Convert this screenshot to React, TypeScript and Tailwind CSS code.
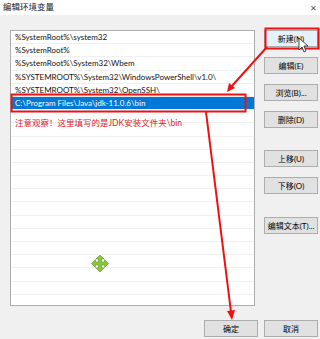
const paths = [
  '%SystemRoot%\\system32',
  '%SystemRoot%',
  '%SystemRoot%\\System32\\Wbem',
  '%SYSTEMROOT%\\System32\\WindowsPowerShell\\v1.0\\',
  '%SYSTEMROOT%\\System32\\OpenSSH\\',
  'C:\\Program Files\\Java\\jdk-11.0.6\\bin',
]

const rows = Array.from({ length: 21 }, (_, i) => paths[i] ?? '')

const font = { fontFamily: 'Lato, "Noto Sans CJK SC", sans-serif' }

function Btn({ label, className = '' }: { label: string; className?: string }) {
  return (
    <div
      className={`flex h-[17px] w-[54px] items-center justify-center whitespace-nowrap border border-[#adadad] bg-[#e1e1e1] text-[8px] leading-none text-black ${className}`}
    >
      {label}
    </div>
  )
}

export default function App() {
  return (
    <div
      className="relative flex h-[339px] w-[320px] flex-col overflow-hidden bg-[#f0f0f0]"
      style={font}
    >
      <header className="flex h-[15px] items-center justify-between bg-white pl-[3px] pr-[3px]">
        <span className="text-[8.5px] leading-none text-[#222]">编辑环境变量</span>
        <span className="text-[8px] leading-none text-[#555]">✕</span>
      </header>

      <div className="flex pl-[10px] pt-[15px]">
        <div className="h-[276px] w-[245px] overflow-hidden border border-[#adadad] bg-white">
          {rows.map((text, i) => (
            <div
              key={i}
              className={`flex h-[13.2px] items-center border-b border-[#f0f0f0] pl-[4px] text-[8px] leading-none ${
                i === 5 ? 'bg-[#0078d7] text-white' : 'text-[#111]'
              }`}
            >
              {text}
            </div>
          ))}
        </div>

        <div className="ml-[9px] flex flex-col">
          <Btn label="新建(N)" className="border-[#0078d7] bg-[#e5f1fb]" />
          <Btn label="编辑(E)" className="mt-[10px]" />
          <Btn label="浏览(B)..." className="mt-[10px]" />
          <Btn label="删除(D)" className="mt-[10px]" />
          <Btn label="上移(U)" className="mt-[22px]" />
          <Btn label="下移(O)" className="mt-[10px]" />
          <Btn label="编辑文本(T)..." className="mt-[23px]" />
        </div>
      </div>

      <div className="mt-[14px] flex justify-end gap-[6px] pr-[2px]">
        <Btn label="确定" className="w-[53px] border-[#0078d7]" />
        <Btn label="取消" />
      </div>

      {/* annotation */}
      <div className="absolute left-[15px] top-[119px] text-[8.5px] leading-none text-[#e0202a]">
        注意观察！这里填写的是JDK安装文件夹\bin
      </div>

      <svg className="pointer-events-none absolute left-0 top-0" width="320" height="339">
        <rect x="265.5" y="28.5" width="53" height="20" fill="none" stroke="#ee1111" strokeWidth="2" />
        <rect x="11.5" y="94.5" width="234" height="17" fill="none" stroke="#ee1111" strokeWidth="2" />
        <line x1="267" y1="47" x2="231" y2="87" stroke="#ee1111" strokeWidth="2" />
        <polygon points="227,92 229,83 235,88" fill="#ee1111" />
        <line x1="206" y1="112" x2="231" y2="312" stroke="#ee1111" strokeWidth="2" />
        <polygon points="232,320 227,311 235,310" fill="#ee1111" />
        <path
          d="M299 38 L299 50 L302 47 L304 52 L306 51 L304 46 L308 46 Z"
          fill="white"
          stroke="#222"
          strokeWidth="0.8"
        />
        <path
          d="M100 255 L104 259 L101.5 259 L101.5 262 L104.5 262 L104.5 259.5 L108.5 263.5 L104.5 267.5 L104.5 265 L101.5 265 L101.5 268 L104 268 L100 272 L96 268 L98.5 268 L98.5 265 L95.5 265 L95.5 267.5 L91.5 263.5 L95.5 259.5 L95.5 262 L98.5 262 L98.5 259 L96 259 Z"
          fill="#8cc63f"
          stroke="#5a9a22"
          strokeWidth="0.6"
        />
      </svg>
    </div>
  )
}
